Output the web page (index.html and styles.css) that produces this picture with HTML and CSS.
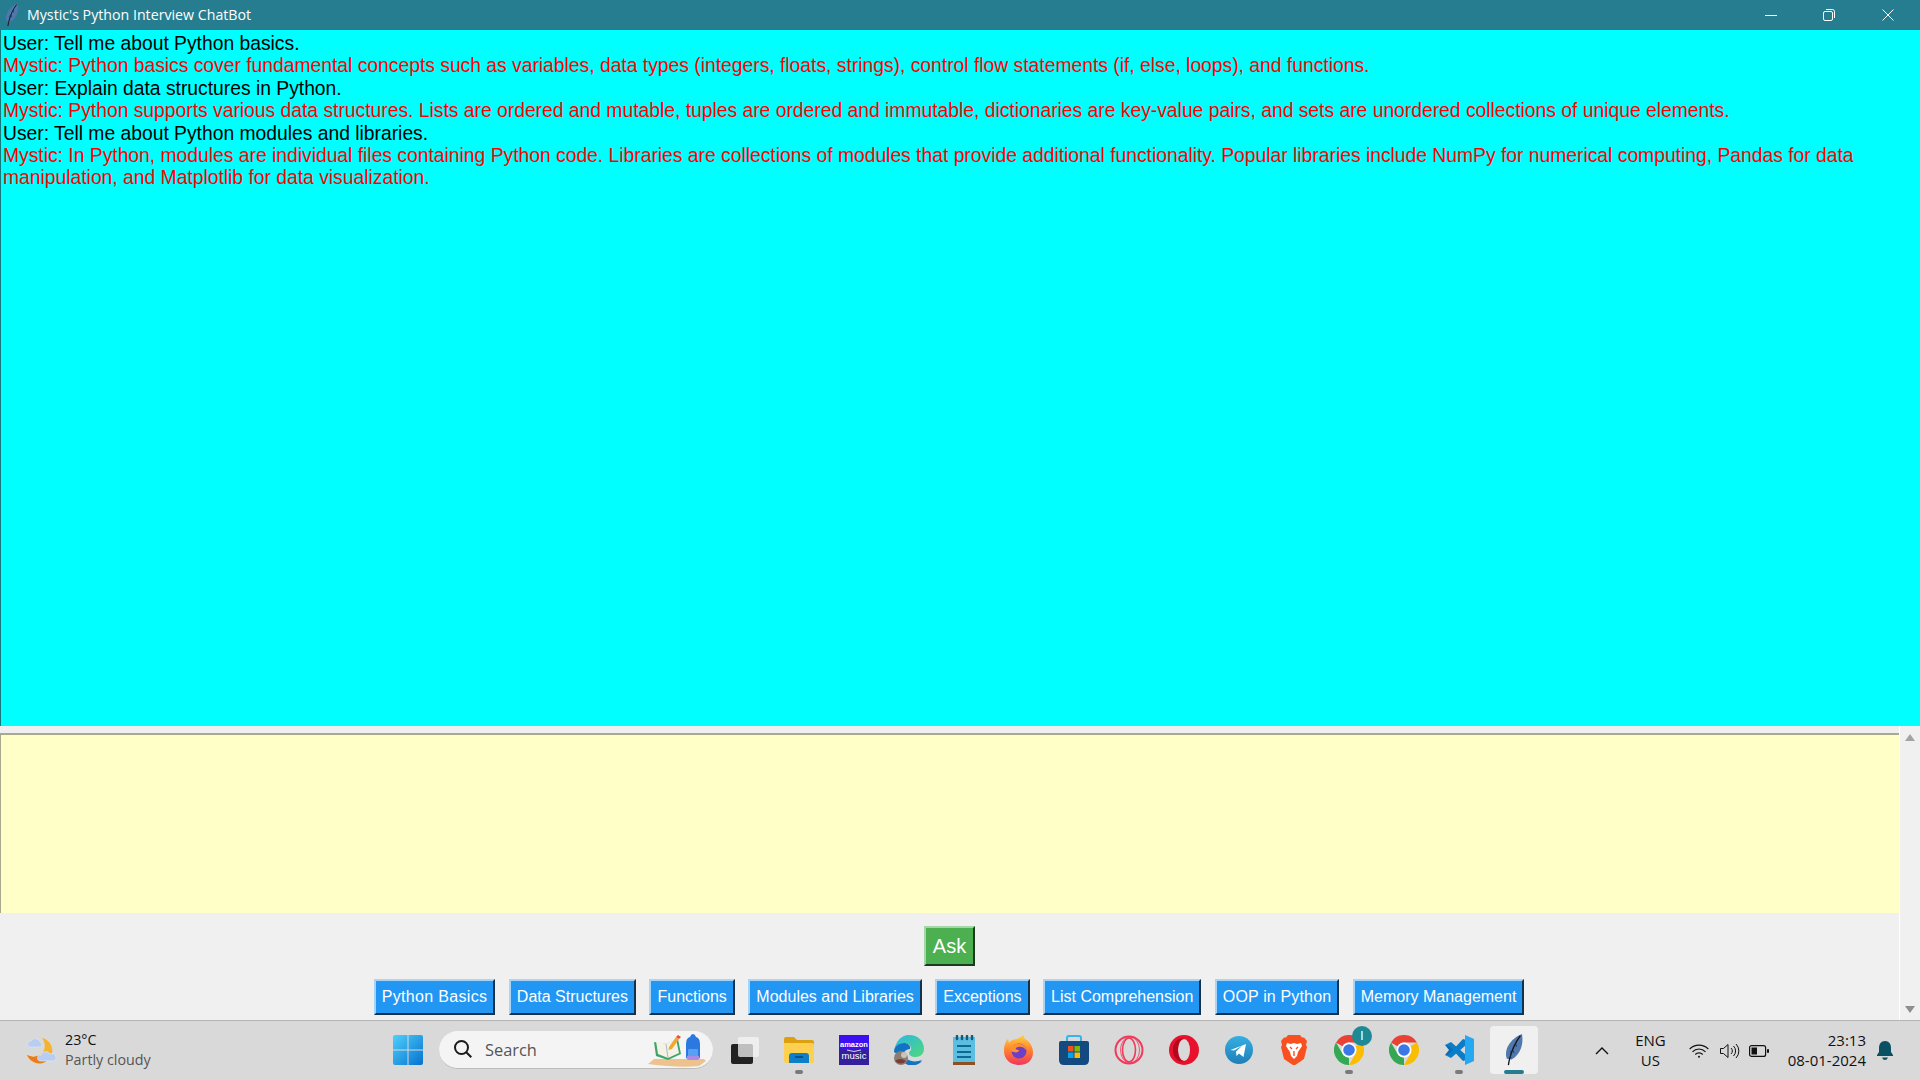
FILE: index.html
```html
<!DOCTYPE html>
<html>
<head>
  <title>Mystic's Python Interview ChatBot</title>
  <link rel="stylesheet" href="styles.css">
</head>
<body>
  <svg class="defs" width="0" height="0">
    <symbol id="feather" viewBox="0 0 24 40">
      <path d="M3 31C-1 20 7 6 22 0c2 12-1 25-13 32z" fill="#4f78ae"/>
      <path d="M20 2C14 10 9 20 6 33l-1 6" fill="none" stroke="#111" stroke-width="1.6"/>
      <path d="M8 30c-1-3 1-6 0-9M12 24l-2-5M15 16l-1-5" stroke="#1c2b44" stroke-width="1" fill="none"/>
    </symbol>
    <symbol id="chrome" viewBox="0 0 30 30">
      <path d="M2 7.500A15 15 0 0 1 28 7.500H15A7.500 7.500 0 0 0 8.500 11.200Z" fill="#e94235"/>
      <path d="M2 7.500A15 15 0 0 1 28 7.500H15A7.500 7.500 0 0 0 8.500 11.200Z" fill="#fbbc04" transform="rotate(120 15 15)"/>
      <path d="M2 7.500A15 15 0 0 1 28 7.500H15A7.500 7.500 0 0 0 8.500 11.200Z" fill="#34a853" transform="rotate(240 15 15)"/>
      <circle cx="15" cy="15" r="7.400" fill="#fff"/>
      <circle cx="15" cy="15" r="5.800" fill="#3b78e7"/>
    </symbol>
  </svg>

  <header class="titlebar">
    <svg class="title-icon"><use href="#feather"/></svg>
    <span class="title-text">Mystic's Python Interview ChatBot</span>
    <div class="win-buttons">
      <span class="win-btn"><svg width="12" height="12" viewBox="0 0 12 12"><path d="M0 6.500h12" stroke="#fff"/></svg></span>
      <span class="win-btn"><svg width="12" height="12" viewBox="0 0 12 12" fill="none" stroke="#fff"><rect x=".5" y="2.500" width="9" height="9" rx="1.500"/><path d="M3 .5h6.500a2 2 0 0 1 2 2V9"/></svg></span>
      <span class="win-btn"><svg width="12" height="12" viewBox="0 0 12 12"><path d="M.5.5l11 11M11.500.5l-11 11" stroke="#fff"/></svg></span>
    </div>
  </header>

  <div class="chat">
    <p class="user">User: Tell me about Python basics.</p>
    <p class="bot">Mystic: Python basics cover fundamental concepts such as variables, data types (integers, floats, strings), control flow statements (if, else, loops), and functions.</p>
    <p class="user">User: Explain data structures in Python.</p>
    <p class="bot">Mystic: Python supports various data structures. Lists are ordered and mutable, tuples are ordered and immutable, dictionaries are key-value pairs, and sets are unordered collections of unique elements.</p>
    <p class="user">User: Tell me about Python modules and libraries.</p>
    <p class="bot">Mystic: In Python, modules are individual files containing Python code. Libraries are collections of modules that provide additional functionality. Popular libraries include NumPy for numerical computing, Pandas for data manipulation, and Matplotlib for data visualization.</p>
  </div>

  <div class="lower">
    <div class="controls">
      <div class="input-box"></div>
      <button class="ask">Ask</button>
      <div class="topics">
        <button class="topic topic-loose">Python Basics</button>
        <button class="topic">Data Structures</button>
        <button class="topic">Functions</button>
        <button class="topic">Modules and Libraries</button>
        <button class="topic">Exceptions</button>
        <button class="topic">List Comprehension</button>
        <button class="topic topic-oop">OOP in Python</button>
        <button class="topic">Memory Management</button>
      </div>
    </div>
    <div class="scrollbar">
      <span class="arrow-up"></span>
      <span class="arrow-down"></span>
    </div>
  </div>

  <footer class="taskbar">
    <div class="weather">
      <svg width="32" height="30" viewBox="0 0 32 30">
        <path d="M17 2a13 13 0 1 1-15 17c6 3 13 2 16-3s2-10-1-14z" fill="#f5b32e"/>
        <path d="M2 19c3 6 9 9 15 8 1 0 3-1 4-2l-5-6-8 2z" fill="#ec7a1c"/>
        <path d="M5 11a3 3 0 0 1 1-6 5 5 0 0 1 9 1 2.600 2.600 0 0 1 0 5z" fill="#b9cdf0" stroke="#dfe8f8" stroke-width=".6"/>
        <path d="M15 25a3 3 0 0 1 1-6 5 5 0 0 1 9-1 3.500 3.500 0 0 1 4 7z" fill="#b9cdf0" stroke="#e6edfa" stroke-width=".6"/>
      </svg>
      <div class="weather-text">
        <span class="temp">23°C</span>
        <span class="cond">Partly cloudy</span>
      </div>
    </div>

    <div class="apps">
      <span class="app">
        <svg width="30" height="30" viewBox="0 0 30 30">
          <defs><linearGradient id="win" x1="0" y1="0" x2="1" y2="1"><stop offset="0" stop-color="#4fd0fb"/><stop offset="1" stop-color="#0571cf"/></linearGradient></defs>
          <path d="M2 0h12.500v14.500H0V2a2 2 0 0 1 2-2zM15.500 0H28a2 2 0 0 1 2 2v12.500H15.500zM0 15.500h14.500V30H2a2 2 0 0 1-2-2zM15.500 15.500H30V28a2 2 0 0 1-2 2H15.500z" fill="url(#win)"/>
        </svg>
      </span>

      <div class="search">
        <svg width="20" height="20" viewBox="0 0 20 20" fill="none" stroke="#1b1b1b" stroke-width="2"><circle cx="8.500" cy="8.500" r="6.500"/><path d="M13.300 13.300l5 5"/></svg>
        <span class="search-text">Search</span>
        <svg class="search-art" width="58" height="34" viewBox="0 0 58 34">
          <path d="M0 31l6-5h50l2 2-7 5q-20 2-51-2z" fill="#eec28d"/>
          <path d="M6 9l12 2 12-5 3 15-13 6-12-4z" fill="#3ea56a"/>
          <path d="M8 8l10 3 10-5 3 14-11 5-10-4z" fill="#f4f2e6"/>
          <path d="M18 11l2 14" stroke="#9aa" stroke-width=".8"/>
          <path d="M21 14l7-10 3 2-7 10-3.500 1z" fill="#f2a72e"/>
          <path d="M28 4l2-2 3 2-2 2z" fill="#e8503a"/>
          <path d="M38 24V11q0-6 4-7 1-3 3-3t3 3q4 1 4 7v13q0 2-3 2h-8q-3 0-3-2z" fill="#2a78e0"/>
          <path d="M41 16h8q1 0 1 2v8h-10v-8q0-2 1-2z" fill="#5aa0f2"/>
          <path d="M39 23h12v3q0 1-2 1h-8q-2 0-2-1z" fill="#a98be8"/>
        </svg>
      </div>

      <span class="app">
        <svg width="30" height="30" viewBox="0 0 30 30">
          <rect x="2" y="9" width="22" height="20" rx="2" fill="#222"/>
          <rect x="9" y="2" width="21" height="20" rx="2" fill="#f4f4f4" fill-opacity=".75"/>
        </svg>
      </span>

      <span class="app open">
        <svg width="30" height="26" viewBox="0 0 30 26">
          <path d="M0 2q0-2 2-2h8l3 3h15q2 0 2 2v3H0z" fill="#dca010"/>
          <path d="M0 6h28q2 0 2 2v16q0 2-2 2H2q-2 0-2-2z" fill="#fdd04f"/>
          <path d="M5 26v-7q0-3 3-3h14q3 0 3 3v7z" fill="#0d7fc9"/>
          <path d="M11 20h8" stroke="#063f6d" stroke-width="1.400"/>
        </svg>
      </span>

      <span class="app">
        <svg width="30" height="30" viewBox="0 0 30 30">
          <rect width="30" height="30" fill="#3c0ff0"/>
          <rect y="15" width="30" height="15" fill="#35209c"/>
          <text x="15" y="12" class="amz amz-a">amazon</text>
          <path d="M8 15q7 3 14 0" stroke="#fff" stroke-width=".8" fill="none"/>
          <text x="15" y="24" class="amz amz-m">music</text>
        </svg>
      </span>

      <span class="app">
        <svg width="30" height="30" viewBox="0 0 30 30">
          <defs>
            <linearGradient id="edge" x1="0" y1="0" x2="1" y2="1"><stop offset="0" stop-color="#2bb6e8"/><stop offset="1" stop-color="#4fd97a"/></linearGradient>
          </defs>
          <path d="M15 0c9 0 15 6 15 14 0 5-4 8-8 8-5 0-7-2-7-4 0-1 1-2 2-3 1-3-2-7-7-7-6 0-10 5-10 9C1 7 7 0 15 0z" fill="url(#edge)"/>
          <path d="M0 17c0-5 4-9 10-9 4 0 7 3 6 6-4 0-8 4-8 9 0 3 2 5 6 7 5 1 11 0 14-4-3 2-12 2-16-1" fill="#1273c4"/>
          <path d="M14 30c5 1 11-1 14-5-5 2-11 2-15-1z" fill="#1273c4"/>
          <circle cx="7" cy="23" r="7" fill="#8a7d72"/>
          <circle cx="10" cy="20" r="3" fill="#c9c3bc"/>
          <path d="M1 26q5-4 11 0-5 5-11 0z" fill="#7a3b32"/>
        </svg>
      </span>

      <span class="app">
        <svg width="22" height="30" viewBox="0 0 22 30">
          <rect y="2" width="22" height="26" fill="#5cbfe2"/>
          <rect y="27" width="22" height="3" fill="#8c5123"/>
          <path d="M4 1v3M9 1v3M14 1v3M19 1v3" stroke="#0b5f85" stroke-width="2.500" stroke-linecap="round"/>
          <path d="M4 11h14M4 17h14M4 22h14" stroke="#0e6a94" stroke-width="2"/>
        </svg>
      </span>

      <span class="app">
        <svg width="30" height="30" viewBox="0 0 30 30">
          <defs><linearGradient id="fox" x1="0" y1="0" x2="0" y2="1"><stop offset="0" stop-color="#ffd23e"/><stop offset=".55" stop-color="#ff7a2f"/><stop offset="1" stop-color="#f0345f"/></linearGradient></defs>
          <path d="M1 9c1-3 2-4 3-5l1 4c2-3 5-4 8-4 3-2 5-3 7-4 0 2 0 3 1 4 4 2 8 7 8 13 0 9-6 13-14 13S0 25 0 16c0-2 0-5 1-7z" fill="url(#fox)"/>
          <circle cx="15" cy="16" r="7.500" fill="#6c3fc9"/>
          <path d="M6 15c1-5 6-7 11-6 3 1 5 3 5 6-2-3-5-4-8-3-4 1-2 3 1 3 0 2-3 3-5 2-2 0-3-1-4-2z" fill="#ff8f2f"/>
        </svg>
      </span>

      <span class="app">
        <svg width="30" height="30" viewBox="0 0 30 30">
          <path d="M8 6V3q0-2 2-2h10q2 0 2 2v3" fill="none" stroke="#35b4ee" stroke-width="2"/>
          <path d="M2 6h26q2 0 2 2v17q0 5-5 5H5q-5 0-5-5V8q0-2 2-2z" fill="#134a80"/>
          <rect x="9" y="11" width="5.500" height="5.500" fill="#f25022"/>
          <rect x="15.500" y="11" width="5.500" height="5.500" fill="#7fba00"/>
          <rect x="9" y="17.500" width="5.500" height="5.500" fill="#00a4ef"/>
          <rect x="15.500" y="17.500" width="5.500" height="5.500" fill="#ffb900"/>
        </svg>
      </span>

      <span class="app">
        <svg width="30" height="30" viewBox="0 0 30 30" fill="none" stroke="#f03a5c">
          <circle cx="15" cy="15" r="13.500" stroke-width="2"/>
          <ellipse cx="15" cy="15" rx="6.500" ry="12" stroke-width="1.600"/>
          <ellipse cx="16" cy="15" rx="9.500" ry="13" stroke-width=".8"/>
        </svg>
      </span>

      <span class="app">
        <svg width="30" height="30" viewBox="0 0 30 30">
          <circle cx="15" cy="15" r="15" fill="#e8112d"/>
          <ellipse cx="15" cy="15" rx="6" ry="11" fill="#d9d9d9"/>
          <path d="M9 15c0-6 2-11 6-11-5-2-11 3-11 11s6 13 11 11c-4 0-6-5-6-11z" fill="#b3091f"/>
        </svg>
      </span>

      <span class="app">
        <svg width="28" height="28" viewBox="0 0 28 28">
          <defs><linearGradient id="tg" x1="0" y1="0" x2="0" y2="1"><stop offset="0" stop-color="#37aee2"/><stop offset="1" stop-color="#1e7fb8"/></linearGradient></defs>
          <circle cx="14" cy="14" r="14" fill="url(#tg)"/>
          <path d="M5.500 14L21 8l-2.500 13-4.500-3.500-2.500 2.500-.5-4.500 6.500-6-8.500 5z" fill="#fff"/>
        </svg>
      </span>

      <span class="app">
        <svg width="26" height="30" viewBox="0 0 26 30">
          <path d="M7 0h12l2 2.500h2L26 6l-1 4 1 2-3 12-8 5.500q-2 1-4 0L3 24 0 12l1-2-1-4 3-3.500h2z" fill="#f9501f"/>
          <path d="M6 8l4 1 3-1 3 1 4-1 1 3-4 6-1 4-3 3-3-3-1-4-4-6z" fill="#fff"/>
          <path d="M9 12l2 2M17 12l-2 2M13 16v5" stroke="#f9501f" stroke-width="1.400"/>
        </svg>
      </span>

      <span class="app open">
        <svg width="30" height="30"><use href="#chrome"/></svg>
        <span class="badge"><i></i></span>
      </span>

      <span class="app">
        <svg width="30" height="30"><use href="#chrome"/></svg>
      </span>

      <span class="app open">
        <svg width="30" height="30" viewBox="0 0 30 30">
          <path d="M1 10l2-1 8 6-8 6-2-1 4-5z" fill="#0a6cb4"/>
          <path d="M3 9l4-2 15 13v5l-3 1z" fill="#0a7cc8"/>
          <path d="M3 21l4 2 15-13V5l-3-1z" fill="#0a7cc8"/>
          <path d="M21 0l9 4v22l-9 4z" fill="#24a8f2"/>
        </svg>
      </span>

      <span class="app active">
        <svg width="24" height="32"><use href="#feather"/></svg>
      </span>
    </div>

    <div class="tray">
      <svg class="chev" width="14" height="8" viewBox="0 0 14 8"><path d="M1 7l6-6 6 6" fill="none" stroke="#111" stroke-width="1.400"/></svg>
      <div class="lang"><span>ENG</span><span>US</span></div>
      <svg class="wifi" width="20" height="14" viewBox="0 0 20 14" fill="none" stroke="#111" stroke-width="1.200"><path d="M.7 5a13 13 0 0 1 18.600 0M3.500 7.800a9 9 0 0 1 13 0M6.300 10.500a5 5 0 0 1 7.400 0"/><circle cx="10" cy="12.800" r="1" fill="#111" stroke="none"/></svg>
      <svg class="vol" width="20" height="16" viewBox="0 0 20 16" fill="none" stroke="#111"><path d="M.5 5.500h3L8 1.500v13l-4.500-4h-3z"/><path d="M11 5a4 4 0 0 1 0 6M13.500 3a7 7 0 0 1 0 10M16 1a10 10 0 0 1 0 14"/></svg>
      <svg class="batt" width="20" height="12" viewBox="0 0 20 12"><rect x=".6" y=".6" width="16" height="10.800" rx="2" fill="none" stroke="#111" stroke-width="1.200"/><rect x="2.500" y="2.500" width="5.500" height="7" fill="#111"/><rect x="18" y="4" width="2" height="4" rx="1" fill="#111"/></svg>
      <div class="clock"><span>23:13</span><span>08-01-2024</span></div>
      <svg class="bell" width="16" height="20" viewBox="0 0 16 20"><path d="M8 0c4 0 6 3 6 7v4l2 3v1H0v-1l2-3V7c0-4 2-7 6-7z" fill="#0c5163"/><path d="M5 16.500h6q-1 2.500-3 2.500t-3-2.500z" fill="#0c5163"/></svg>
    </div>
  </footer>
</body>
</html>
```

FILE: styles.css
```css
html, body {
  margin: 0;
  height: 1080px;
  overflow: hidden;
}

body {
  display: flex;
  flex-direction: column;
  background-color: #f0f0f0;
  font-family: "Liberation Sans", Arial, sans-serif;
}

.defs {
  position: absolute;
}

/* title bar */
.titlebar {
  height: 30px;
  flex: none;
  display: flex;
  align-items: center;
  background-color: #267d8f;
  color: #fff;
}

.title-icon {
  width: 14px;
  height: 24px;
  margin-left: 5px;
}

.title-text {
  margin-left: 8px;
  padding-bottom: 2px;
  font-family: "Open Sans", sans-serif;
  font-size: 14.200px;
}

.win-buttons {
  margin-left: auto;
  display: flex;
  padding-right: 3px;
}

.win-btn {
  width: 58.500px;
  height: 30px;
  display: flex;
  align-items: center;
  justify-content: center;
}

/* chat output */
.chat {
  height: 693px;
  flex: none;
  padding: 3px 0 0 2px;
  border-left: 1px solid #16787f;
  background-color: #00ffff;
  font-size: 19.300px;
  line-height: 22.400px;
}

.chat p {
  margin: 0;
}

.user {
  color: #000;
}

.bot {
  color: #ff0000;
}

/* lower panel */
.lower {
  flex: 1;
  display: flex;
  min-height: 0;
}

.controls {
  flex: 1;
  display: flex;
  flex-direction: column;
  align-items: center;
  padding-top: 7px;
}

.input-box {
  align-self: stretch;
  height: 178px;
  flex: none;
  border-top: 2px solid #a9a98f;
  border-left: 1px solid #a9a98f;
  background-color: #ffffc8;
}

.ask {
  width: 51px;
  height: 40px;
  margin-top: 13px;
  padding: 0;
  border: 2px solid;
  border-color: #a5d6a7 #1c3b1e #1c3b1e #a5d6a7;
  background-color: #4caf50;
  color: #fff;
  font: 20px "Liberation Sans", Arial, sans-serif;
}

.topics {
  display: flex;
  gap: 13.500px;
  margin-top: 13px;
  padding-right: 1px;
}

.topic {
  height: 36px;
  padding: 0 6px;
  border: 2px solid;
  border-color: #a8d4f7 #15324b #15324b #a8d4f7;
  background-color: #2196f3;
  color: #fff;
  font: 16px "Liberation Sans", Arial, sans-serif;
}

.topic-loose {
  letter-spacing: .33px;
}

.topic-oop {
  letter-spacing: .15px;
}

.scrollbar {
  width: 20px;
  flex: none;
  display: flex;
  flex-direction: column;
  justify-content: space-between;
  align-items: center;
  padding: 8px 0 7px;
  border-left: 1px solid #fff;
  background-color: #f0f0f0;
}

.arrow-up,
.arrow-down {
  width: 0;
  height: 0;
  border-left: 5px solid transparent;
  border-right: 5px solid transparent;
}

.arrow-up {
  border-bottom: 7px solid #a3a3a3;
}

.arrow-down {
  border-top: 7px solid #8e8e8e;
}

/* windows taskbar */
.taskbar {
  height: 59px;
  flex: none;
  display: flex;
  align-items: center;
  border-top: 1px solid #b4b4b4;
  background-color: #d9d9d9;
  color: #111;
  font-family: "Open Sans", sans-serif;
}

.weather {
  width: 355px;
  flex: none;
  display: flex;
  align-items: center;
  gap: 8px;
  padding-left: 25px;
}

.weather-text {
  display: flex;
  flex-direction: column;
  padding-bottom: 2px;
  line-height: 20px;
  font-size: 14.300px;
}

.cond {
  color: #555;
}

.apps {
  display: flex;
  align-items: center;
  margin-bottom: 2px;
}

.app {
  position: relative;
  width: 55px;
  height: 48px;
  flex: none;
  display: flex;
  align-items: center;
  justify-content: center;
}

.open::after,
.active::after {
  content: "";
  position: absolute;
  bottom: 0;
  left: 50%;
  height: 4px;
  border-radius: 2px;
  transform: translateX(-50%);
}

.open::after {
  width: 8px;
  background-color: #7a7a7a;
}

.active {
  width: 48px;
  margin-left: 4px;
  border-radius: 4px;
  background-color: #f0f0f0;
}

.active::after {
  width: 20px;
  background-color: #267d8f;
}

.amz {
  fill: #fff;
  text-anchor: middle;
  font-family: "Liberation Sans", sans-serif;
}

.amz-a {
  font-size: 7.500px;
  font-weight: bold;
}

.amz-m {
  font-size: 9.500px;
}

.badge {
  position: absolute;
  top: 0;
  right: 4px;
  width: 20px;
  height: 20px;
  border-radius: 50%;
  display: flex;
  align-items: center;
  justify-content: center;
  background-color: #1f8a96;
}

.badge i {
  width: 2px;
  height: 9px;
  background-color: #9fdde2;
}

.search {
  width: 274px;
  height: 38px;
  margin: 0 3px 0 4px;
  box-sizing: border-box;
  flex: none;
  display: flex;
  align-items: center;
  padding-left: 14px;
  border-radius: 19px;
  border-bottom: 1px solid #bcbcbc;
  background-color: #f4f4f4;
}

.search-text {
  margin-left: 12px;
  color: #555;
  font-size: 16.400px;
}

.search-art {
  margin-left: auto;
  margin-right: 7px;
  margin-top: 2px;
}

.tray {
  margin-left: auto;
  display: flex;
  align-items: center;
}

.chev {
  margin-right: 26px;
}

.lang,
.clock {
  display: flex;
  flex-direction: column;
  padding-bottom: 2px;
  line-height: 20px;
  font-size: 15px;
}

.lang {
  align-items: center;
  margin-right: 23px;
}

.wifi {
  margin-right: 11px;
}

.vol {
  margin-right: 9px;
}

.batt {
  margin-right: 19px;
}

.clock {
  align-items: flex-end;
  margin-right: 11px;
}

.bell {
  margin-right: 27px;
}
```
